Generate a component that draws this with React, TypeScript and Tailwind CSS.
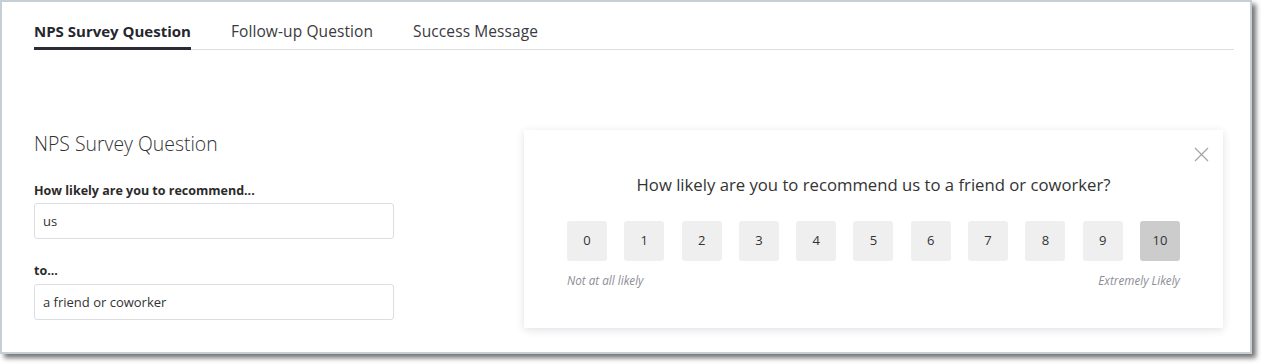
import { useState } from 'react';

const FONT = { fontFamily: '"Open Sans", Lato, "Liberation Sans", sans-serif' };

const TABS = ['NPS Survey Question', 'Follow-up Question', 'Success Message'];

export default function App() {
  const [tab, setTab] = useState(0);
  const [recommend, setRecommend] = useState('us');
  const [target, setTarget] = useState('a friend or coworker');
  const [score, setScore] = useState<number | null>(10);

  return (
    <div className="w-[1261px] h-[364px] bg-white" style={FONT}>
      <div className="w-[1252px] h-[354px] bg-white border-2 border-[#c6cfd3] shadow-[4px_4px_5px_rgba(0,0,0,0.55)]">
        {/* Tabs */}
        <div className="ml-[32px] w-[1200px] flex gap-10 border-b border-[#dcdee2]">
          {TABS.map((t, i) => (
            <button
              key={t}
              onClick={() => setTab(i)}
              className={`pt-[19px] pb-[6px] -mb-px leading-[20px] border-b-[3px] ${
                tab === i
                  ? 'text-[15px] font-bold text-[#26262e] border-[#2b2b33]'
                  : 'text-[15.5px] tracking-[0.1px] text-[#3a3a40] border-transparent'
              }`}
            >
              {t}
            </button>
          ))}
        </div>

        <div className="flex items-start gap-[130px] ml-[32px] mt-[80px]">
          {/* Form */}
          <div className="w-[360px] mt-[2px]">
            <h2 className="text-[19.4px] leading-[24px] font-light text-[#333]">NPS Survey Question</h2>
            <label className="block mt-[27px] text-[12.5px] leading-[16px] font-bold text-[#2a2a2a]">
              How likely are you to recommend...
            </label>
            <input
              value={recommend}
              onChange={(e) => setRecommend(e.target.value)}
              className="mt-[4px] w-full h-[36px] px-[8px] border border-[#dadde1] rounded-[3px] text-[13px] text-[#333] outline-none"
            />
            <label className="block mt-[24px] text-[12.5px] leading-[16px] font-bold text-[#2a2a2a]">
              to...
            </label>
            <input
              value={target}
              onChange={(e) => setTarget(e.target.value)}
              className="mt-[5px] w-full h-[36px] px-[8px] border border-[#dadde1] rounded-[3px] text-[13px] text-[#333] outline-none"
            />
          </div>

          {/* Preview */}
          <div className="relative w-[699px] h-[198px] bg-white px-[43px] pt-[44px] shadow-[0_2px_8px_rgba(40,40,80,0.14)]">
            <button className="absolute top-[17px] right-[14px] w-[15px] h-[15px] text-[#a3a3a3]">
              <svg viewBox="0 0 15 15" className="w-[15px] h-[15px]" fill="none" stroke="currentColor" strokeWidth="1.2">
                <path d="M1 1 L14 14 M14 1 L1 14" />
              </svg>
            </button>
            <p className="text-center text-[16.7px] leading-[22px] text-[#333]">
              How likely are you to recommend {recommend} to {target}?
            </p>
            <div className="mt-[25px] flex justify-between">
              {[...Array(11)].map((_, i) => (
                <button
                  key={i}
                  onClick={() => setScore(i)}
                  className={`w-[40px] h-[40px] rounded-[3px] text-[13px] text-[#333] ${
                    score === i ? 'bg-[#cccccc]' : 'bg-[#efefef]'
                  }`}
                >
                  {i}
                </button>
              ))}
            </div>
            <div className="mt-[12px] flex justify-between text-[11.7px] leading-[14px] italic text-[#8d8d97]">
              <span>Not at all likely</span>
              <span>Extremely Likely</span>
            </div>
          </div>
        </div>
      </div>
    </div>
  );
}
